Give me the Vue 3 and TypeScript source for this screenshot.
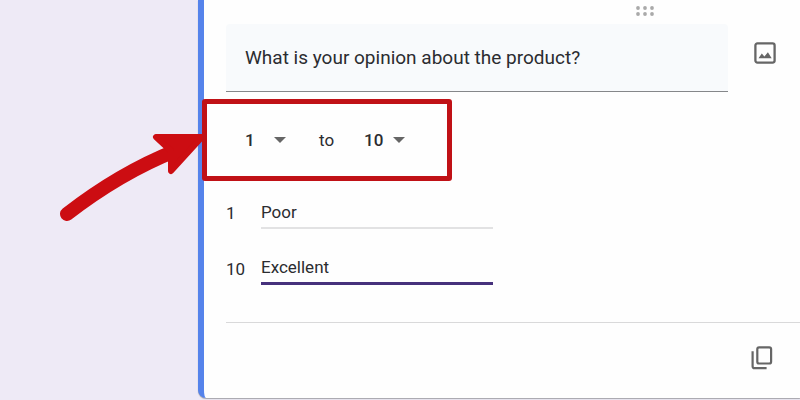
<script setup lang="ts">
import { ref } from 'vue'

const question = ref('What is your opinion about the product?')
const low = ref(1)
const high = ref(10)
const lowLabel = ref('Poor')
const highLabel = ref('Excellent')
const lowOptions: number[] = [0, 1]
const highOptions: number[] = [2, 3, 4, 5, 6, 7, 8, 9, 10]
</script>

<template>
  <main class="page">
    <section class="card">
      <div class="handle">
        <svg width="18" height="10" viewBox="0 0 18 10" fill="#a9a9a9" aria-hidden="true">
          <circle cx="2" cy="2" r="1.9" /><circle cx="9" cy="2" r="1.9" /><circle cx="16" cy="2" r="1.9" />
          <circle cx="2" cy="8" r="1.9" /><circle cx="9" cy="8" r="1.9" /><circle cx="16" cy="8" r="1.9" />
        </svg>
      </div>

      <div class="question-row">
        <input v-model="question" class="question" type="text" aria-label="Question" />
        <button class="icon-button" type="button" aria-label="Add image">
          <svg width="22" height="22" viewBox="0 0 22 22" aria-hidden="true">
            <rect x="1.4" y="1.4" width="19.2" height="19.2" rx="2" fill="none" stroke="#666" stroke-width="2.3" />
            <path d="M4.5 16.3 7.8 11.5l2.6 3 3.5-4.2 3.8 6z" fill="#666" />
          </svg>
        </button>
      </div>

      <div class="range">
        <span class="picker">
          <select v-model="low" aria-label="Lowest value">
            <option v-for="n in lowOptions" :key="n" :value="n">{{ n }}</option>
          </select>
          <svg class="caret" width="12" height="6" viewBox="0 0 12 6" aria-hidden="true"><path d="M0 0h12L6 6z" fill="#666" /></svg>
        </span>
        <span class="to">to</span>
        <span class="picker">
          <select v-model="high" aria-label="Highest value">
            <option v-for="n in highOptions" :key="n" :value="n">{{ n }}</option>
          </select>
          <svg class="caret" width="12" height="6" viewBox="0 0 12 6" aria-hidden="true"><path d="M0 0h12L6 6z" fill="#666" /></svg>
        </span>
        <svg class="arrow" width="146" height="96" viewBox="0 0 146 96" aria-hidden="true">
          <path d="M9 86Q62 45 117 23" fill="none" stroke="#cc0d12" stroke-width="14" stroke-linecap="round" />
          <path d="M98 9H144L113 43V23Z" fill="#cc0d12" stroke="#cc0d12" stroke-width="6" stroke-linejoin="round" />
        </svg>
        <span class="highlight"></span>
      </div>

      <div class="labels">
        <div class="label-row">
          <label for="low-label">{{ low }}</label>
          <input id="low-label" v-model="lowLabel" type="text" />
        </div>
        <div class="label-row active">
          <label for="high-label">{{ high }}</label>
          <input id="high-label" v-model="highLabel" type="text" />
        </div>
      </div>

      <footer class="actions">
        <button class="icon-button" type="button" aria-label="Duplicate">
          <svg width="22" height="24" viewBox="0 0 22 24" fill="none" stroke="#666" stroke-width="2.2" aria-hidden="true">
            <rect x="6.3" y="1.3" width="13.8" height="16.2" rx="1.8" />
            <path d="M1.6 5.2V20.2q0 2 2 2H15.6" />
          </svg>
        </button>
      </footer>
    </section>
  </main>
</template>

<style>
body {
  background: #eeeaf6;
}
</style>

<style scoped>
.page {
  padding-left: 198px;
  padding-bottom: 2px;
  overflow: hidden;
  font-family: Roboto, "Liberation Sans", sans-serif;
  font-size: 17px;
  color: #2b2c30;
}

.card {
  padding-left: 22px;
  border-left: 6px solid #5583eb;
  border-bottom-left-radius: 8px;
  background: #fefefe;
  box-shadow: 0 1px 1px #a5a5ab;
}

.handle {
  display: flex;
  justify-content: flex-end;
  height: 18px;
  padding: 6px 146px 0 0;
}

.question-row {
  display: flex;
  align-items: center;
  gap: 26px;
  padding-right: 24px;
}

.question {
  flex: 1;
  min-width: 0;
  height: 68px;
  box-sizing: border-box;
  padding: 0 19px;
  border: 0;
  border-bottom: 1px solid #85878a;
  border-radius: 4px 4px 0 0;
  outline: 0;
  background: #f8fafc;
  color: inherit;
  font: 19px Roboto, "Liberation Sans", sans-serif;
}

.icon-button {
  display: flex;
  padding: 0;
  border: 0;
  background: none;
}

.question-row .icon-button {
  padding-bottom: 10px;
}

.range {
  position: relative;
  display: flex;
  align-items: center;
  height: 72px;
  margin-top: 12px;
  padding-left: 19px;
}

.picker {
  position: relative;
  display: flex;
  align-items: center;
  width: 41px;
}

.picker select {
  width: 100%;
  padding: 0;
  border: 0;
  outline: 0;
  appearance: none;
  background: none;
  color: inherit;
  font: 500 17px Roboto, "Liberation Sans", sans-serif;
}

.caret {
  position: absolute;
  right: 0;
  pointer-events: none;
}

.to {
  padding: 0 30px 0 33px;
}

.highlight {
  position: absolute;
  top: -5px;
  left: -24px;
  width: 250px;
  height: 82px;
  box-sizing: border-box;
  border: 5px solid #c01116;
  border-radius: 3px;
  pointer-events: none;
}

.arrow {
  position: absolute;
  top: 24px;
  left: -168px;
  pointer-events: none;
}

.labels {
  display: grid;
  gap: 26px;
  padding-top: 24px;
}

.label-row {
  display: flex;
  align-items: center;
}

.label-row label {
  width: 35px;
  padding-bottom: 3px;
}

.label-row input {
  width: 232px;
  height: 29px;
  box-sizing: border-box;
  padding: 0 0 4px;
  border: 0;
  border-bottom: 2px solid #e2e2e3;
  outline: 0;
  background: none;
  color: inherit;
  font: 17px Roboto, "Liberation Sans", sans-serif;
}

.label-row.active input {
  height: 30px;
  border-bottom: 3px solid #46317c;
}

.actions {
  display: flex;
  justify-content: flex-end;
  margin-top: 37px;
  padding: 23px 27px 28px 0;
  border-top: 1px solid #d9d9da;
}
</style>
